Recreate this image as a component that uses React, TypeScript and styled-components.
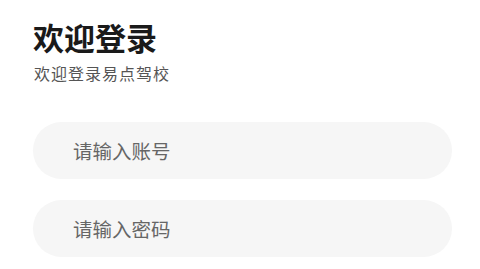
import React from "react";
import styled, { createGlobalStyle } from "styled-components";

const Global = createGlobalStyle`
  html, body { margin: 0; padding: 0; background: #ffffff; }
  body { font-family: "Noto Sans CJK SC", "Noto Sans", sans-serif; }
`;

const Page = styled.div`
  display: flex;
  flex-direction: column;
  padding: 17px 28px 0 33px;
  width: 480px;
  box-sizing: border-box;
`;

const Title = styled.h1`
  margin: 0;
  font-size: 31px;
  line-height: 40px;
  font-weight: 700;
  color: #1a1a1a;
`;

const Subtitle = styled.p`
  margin: 5px 0 0 1px;
  font-size: 16px;
  line-height: 22px;
  color: #555555;
  letter-spacing: 1px;
`;

const Form = styled.div`
  display: flex;
  flex-direction: column;
  gap: 21px;
  margin-top: 38px;
`;

const Field = styled.input`
  box-sizing: border-box;
  width: 419px;
  height: 57px;
  border: none;
  outline: none;
  border-radius: 29px;
  background: #f6f6f6;
  padding: 0 0 0 40px;
  font-family: "Noto Sans CJK SC", "Noto Sans", sans-serif;
  font-size: 19.5px;
  color: #333;
  &::placeholder { color: #666666; }
`;

export default function App() {
  return (
    <>
      <Global />
      <Page>
        <Title>欢迎登录</Title>
        <Subtitle>欢迎登录易点驾校</Subtitle>
        <Form>
          <Field placeholder="请输入账号" />
          <Field placeholder="请输入密码" type="password" />
        </Form>
      </Page>
    </>
  );
}
